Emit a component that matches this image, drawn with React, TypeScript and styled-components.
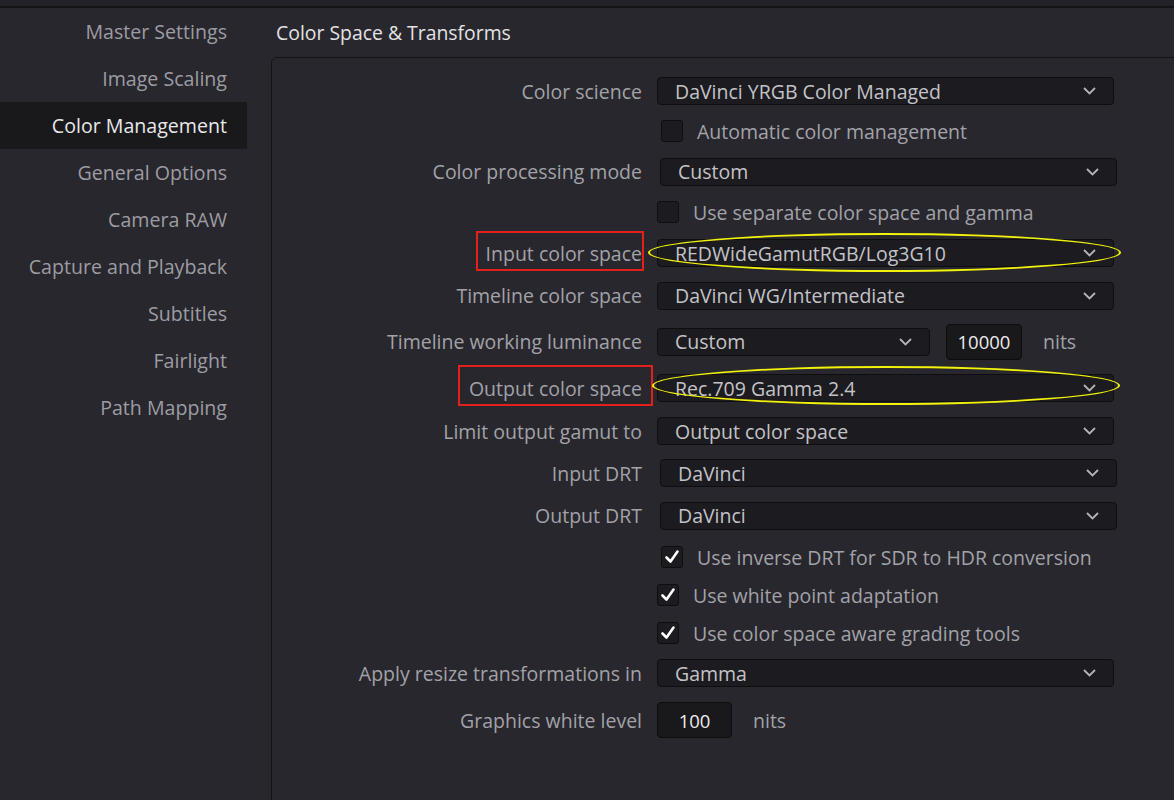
import styled, { createGlobalStyle } from 'styled-components'

const GlobalStyle = createGlobalStyle`
  html, body {
    margin: 0;
    padding: 0;
    height: 800px;
    overflow: hidden;
    background: #28272d;
  }
  body {
    font-family: "Open Sans", "Noto Sans", sans-serif;
  }
`

const Page = styled.div`
  width: 1174px;
  height: 800px;
  display: flex;
  flex-direction: column;
  background: #28272d;
  overflow: hidden;
`
const TopStrip = styled.div`
  height: 6px;
  flex-shrink: 0;
  background: #232228;
  border-bottom: 2px solid #141416;
`
const Body = styled.div`
  flex: 1;
  display: flex;
  flex-direction: row;
  min-height: 0;
`
const Sidebar = styled.nav`
  width: 247px;
  flex-shrink: 0;
  display: flex;
  flex-direction: column;
`
const NavItem = styled.div<{ active?: boolean }>`
  height: 47px;
  display: flex;
  align-items: center;
  justify-content: flex-end;
  padding-right: 20px;
  font-size: 19.6px;
  color: ${(p) => (p.active ? '#e8e8ea' : '#9c9ca3')};
  background: ${(p) => (p.active ? '#19191c' : 'transparent')};
`
const Main = styled.section`
  flex: 1;
  display: flex;
  flex-direction: column;
  padding-left: 24px;
  min-width: 0;
`
const Heading = styled.div`
  height: 49px;
  flex-shrink: 0;
  display: flex;
  align-items: center;
  padding-left: 5px;
  box-sizing: border-box;
  font-size: 19.4px;
  color: #e2e2e4;
`
const Panel = styled.div`
  width: 940px;
  height: 780px;
  flex-shrink: 0;
  border: 1px solid #141416;
  border-radius: 6px;
  padding-top: 13px;
  box-sizing: border-box;
  display: flex;
  flex-direction: column;
`
const Row = styled.div<{ h: number }>`
  height: ${(p) => p.h}px;
  flex-shrink: 0;
  display: grid;
  grid-template-columns: 370px 1fr;
  column-gap: 15px;
  align-items: center;
`
const Label = styled.div`
  justify-self: end;
  font-size: 19.5px;
  color: #a2a2a8;
  white-space: nowrap;
`
const Marked = styled.span<{ l: number; r: number; t: number; b: number }>`
  position: relative;
  &::after {
    content: '';
    position: absolute;
    left: ${(p) => -p.l}px;
    right: ${(p) => -p.r}px;
    top: ${(p) => -p.t}px;
    bottom: ${(p) => -p.b}px;
    border: 2px solid #e3201e;
  }
`
const Controls = styled.div<{ nudge?: number }>`
  justify-self: start;
  display: flex;
  align-items: center;
  margin-left: ${(p) => p.nudge ?? 0}px;
  position: relative;
`
const Ring = styled.div<{ l: number; r: number; t: number; b: number }>`
  position: absolute;
  left: ${(p) => -p.l}px;
  right: ${(p) => -p.r}px;
  top: ${(p) => -p.t}px;
  bottom: ${(p) => -p.b}px;
  border: 2px solid #f2f20a;
  border-radius: 50%;
  pointer-events: none;
`
const Select = styled.div<{ w: number }>`
  width: ${(p) => p.w}px;
  height: 28px;
  box-sizing: border-box;
  display: flex;
  align-items: center;
  justify-content: space-between;
  padding: 0 17px 0 17px;
  background: #1c1b1f;
  border: 1px solid #0e0e10;
  border-radius: 4px;
  font-size: 19.5px;
  color: #c3c3c7;
`
const NumBox = styled.div<{ w: number }>`
  width: ${(p) => p.w}px;
  height: 36px;
  box-sizing: border-box;
  display: flex;
  align-items: center;
  justify-content: center;
  background: #19191b;
  border: 1px solid #0c0c0e;
  border-radius: 4px;
  font-size: 18.5px;
  color: #ececee;
`
const Unit = styled.span`
  font-size: 19.5px;
  color: #a2a2a8;
`
const Check = styled.div`
  width: 22px;
  height: 22px;
  box-sizing: border-box;
  flex-shrink: 0;
  background: #1c1b1f;
  border: 1px solid #0e0e10;
  border-radius: 3px;
  display: flex;
  align-items: center;
  justify-content: center;
`
const CheckText = styled.span`
  margin-left: 14px;
  font-size: 19.5px;
  color: #a2a2a8;
  white-space: nowrap;
`

const Chevron = () => (
  <svg width="13" height="8" viewBox="0 0 13 8">
    <path d="M1 1 L6.5 6.5 L12 1" fill="none" stroke="#b4b4b8" strokeWidth="1.8" />
  </svg>
)

const Tick = () => (
  <svg width="16" height="16" viewBox="0 0 16 16">
    <path d="M2.5 8.5 L6.5 12.5 L13.5 2.5" fill="none" stroke="#ffffff" strokeWidth="2.6" strokeLinecap="round" strokeLinejoin="round" />
  </svg>
)

const Dropdown = ({ value, w = 457 }: { value: string; w?: number }) => (
  <Select w={w}>
    <span>{value}</span>
    <Chevron />
  </Select>
)

const CheckRow = ({
  h,
  text,
  checked,
  nudge,
}: {
  h: number
  text: string
  checked?: boolean
  nudge?: number
}) => (
  <Row h={h}>
    <span />
    <Controls nudge={nudge}>
      <Check>{checked && <Tick />}</Check>
      <CheckText>{text}</CheckText>
    </Controls>
  </Row>
)

const navItems = [
  'Master Settings',
  'Image Scaling',
  'Color Management',
  'General Options',
  'Camera RAW',
  'Capture and Playback',
  'Subtitles',
  'Fairlight',
  'Path Mapping',
]

export default function App() {
  return (
    <Page>
      <GlobalStyle />
      <TopStrip />
      <Body>
        <Sidebar>
          {navItems.map((item) => (
            <NavItem key={item} active={item === 'Color Management'}>
              {item}
            </NavItem>
          ))}
        </Sidebar>
        <Main>
          <Heading>Color Space &amp; Transforms</Heading>
          <Panel>
            <Row h={40}>
              <Label>Color science</Label>
              <Controls>
                <Dropdown value="DaVinci YRGB Color Managed" />
              </Controls>
            </Row>
            <CheckRow h={40} text="Automatic color management" nudge={4} />
            <Row h={41}>
              <Label>Color processing mode</Label>
              <Controls nudge={3}>
                <Dropdown value="Custom" />
              </Controls>
            </Row>
            <CheckRow h={40} text="Use separate color space and gamma" />
            <Row h={42}>
              <Label>
                <Marked l={10} r={2} t={9} b={4}>
                  Input color space
                </Marked>
              </Label>
              <Controls>
                <Dropdown value="REDWideGamutRGB/Log3G10" />
                <Ring l={9} r={7} t={6} b={5} />
              </Controls>
            </Row>
            <Row h={43}>
              <Label>Timeline color space</Label>
              <Controls>
                <Dropdown value="DaVinci WG/Intermediate" />
              </Controls>
            </Row>
            <Row h={49}>
              <Label>Timeline working luminance</Label>
              <Controls>
                <Dropdown value="Custom" w={273} />
                <NumBox w={76} style={{ marginLeft: 16 }}>10000</NumBox>
                <Unit style={{ marginLeft: 21 }}>nits</Unit>
              </Controls>
            </Row>
            <Row h={44}>
              <Label>
                <Marked l={11} r={11} t={10} b={4}>
                  Output color space
                </Marked>
              </Label>
              <Controls>
                <Dropdown value="Rec.709 Gamma 2.4" />
                <Ring l={5} r={6} t={8} b={3} />
              </Controls>
            </Row>
            <Row h={42}>
              <Label>Limit output gamut to</Label>
              <Controls>
                <Dropdown value="Output color space" />
              </Controls>
            </Row>
            <Row h={42}>
              <Label>Input DRT</Label>
              <Controls nudge={3}>
                <Dropdown value="DaVinci" />
              </Controls>
            </Row>
            <Row h={43}>
              <Label>Output DRT</Label>
              <Controls nudge={3}>
                <Dropdown value="DaVinci" />
              </Controls>
            </Row>
            <CheckRow h={40} text="Use inverse DRT for SDR to HDR conversion" checked nudge={4} />
            <CheckRow h={36} text="Use white point adaptation" checked />
            <CheckRow h={40} text="Use color space aware grading tools" checked />
            <Row h={40}>
              <Label>Apply resize transformations in</Label>
              <Controls>
                <Dropdown value="Gamma" />
              </Controls>
            </Row>
            <Row h={54}>
              <Label>Graphics white level</Label>
              <Controls>
                <NumBox w={75}>100</NumBox>
                <Unit style={{ marginLeft: 21 }}>nits</Unit>
              </Controls>
            </Row>
          </Panel>
        </Main>
      </Body>
    </Page>
  )
}
